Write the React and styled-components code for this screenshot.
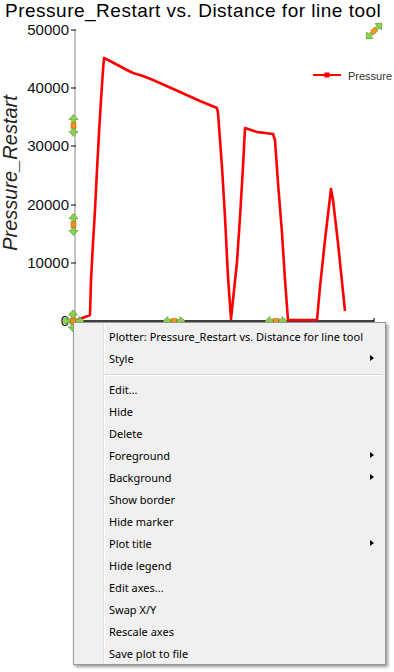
import React from 'react'
import styled, { createGlobalStyle } from 'styled-components'

const GlobalStyle = createGlobalStyle`
  html, body {
    margin: 0;
    padding: 0;
    background: #fff;
  }
`

// pixel points of the curve, measured off the plot
const curve = [
  [75, 321], [90, 315], [91, 280], [93, 243], [95, 210], [97, 170], [99, 133],
  [101, 100], [103, 70], [104, 58], [110, 61], [127, 70], [133, 73], [143, 76],
  [153, 80], [180, 92], [200, 101], [217, 108], [218, 113], [222, 167],
  [225, 217], [228, 277], [231, 319], [237, 262], [240, 217], [243, 167],
  [245, 128], [257, 132], [273, 134], [275, 140], [278, 183], [282, 233],
  [285, 280], [288, 320], [317, 320], [320, 287], [325, 240], [331, 189],
  [333, 200], [338, 243], [345, 311],
]

const ticks = [
  { label: '50000', y: 30 },
  { label: '40000', y: 88 },
  { label: '30000', y: 146 },
  { label: '20000', y: 205 },
  { label: '10000', y: 263 },
  { label: '0', y: 321 },
]

const menuItems = [
  { label: 'Plotter: Pressure_Restart vs. Distance for line tool' },
  { label: 'Style', sub: true },
  { sep: true },
  { label: 'Edit...' },
  { label: 'Hide' },
  { label: 'Delete' },
  { label: 'Foreground', sub: true },
  { label: 'Background', sub: true },
  { label: 'Show border' },
  { label: 'Hide marker' },
  { label: 'Plot title', sub: true },
  { label: 'Hide legend' },
  { label: 'Edit axes...' },
  { label: 'Swap X/Y' },
  { label: 'Rescale axes' },
  { label: 'Save plot to file' },
]

const Handle = ({ x, y, angle = 0 }) => (
  <g transform={`translate(${x},${y}) rotate(${angle})`}>
    <HandleArrow points="0,-11 -4.5,-6 -1.8,-6 -1.8,-3 1.8,-3 1.8,-6 4.5,-6" />
    <HandleArrow points="0,11 -4.5,6 -1.8,6 -1.8,3 1.8,3 1.8,6 4.5,6" />
    <HandleDot x={-2.5} y={-2.5} width={5} height={5} />
  </g>
)

const App = () => {
  return (
    <Page>
      <GlobalStyle />
      <Title>Pressure_Restart vs. Distance for line tool</Title>
      <Chart width="394" height="651" viewBox="0 21 394 651">
        <AxisLabel transform="translate(17,173) rotate(-90)">Pressure_Restart</AxisLabel>

        <line x1="75" y1="30" x2="75" y2="321" stroke="#c4c4c4" strokeWidth="2" />
        {ticks.map((t) => (
          <g key={t.label}>
            <line x1="71" y1={t.y} x2="76" y2={t.y} stroke="#000" strokeWidth="1" />
            <TickLabel x="69" y={t.y + 5.4}>{t.label}</TickLabel>
          </g>
        ))}
        <line x1="75" y1="321" x2="374" y2="321" stroke="#000" strokeWidth="1.5" />
        <line x1="374" y1="318" x2="374" y2="324" stroke="#000" strokeWidth="1" />

        <polyline
          points={curve.map((p) => p.join(',')).join(' ')}
          fill="none"
          stroke="#ff0000"
          strokeWidth="2.6"
          strokeLinejoin="round"
        />

        <line x1="313" y1="75" x2="341" y2="75" stroke="#ff0000" strokeWidth="2" />
        <rect x="324.5" y="72.5" width="5" height="5" fill="#ff0000" />
        <LegendText x="348" y="79.5">Pressure</LegendText>

        <Handle x={73.5} y={125.5} />
        <Handle x={73.5} y={224.5} />
        <Handle x={73} y={321} />
        <Handle x={73} y={321} angle={90} />
        <Handle x={174} y={321} angle={90} />
        <Handle x={276} y={321} angle={90} />
        <Handle x={374} y={31} angle={45} />
      </Chart>

      <Menu>
        {menuItems.map((item, i) =>
          item.sep ? (
            <Separator key={i} />
          ) : (
            <Item key={i}>
              {item.label}
              {item.sub && <SubArrow />}
            </Item>
          )
        )}
      </Menu>
    </Page>
  )
}

export default App

const Page = styled.div`
  position: relative;
  width: 394px;
  height: 672px;
  overflow: hidden;
  background: #fff;
`

const Title = styled.h1`
  margin: 0;
  padding-left: 5px;
  height: 21px;
  font: 400 19px/21px "Liberation Sans", Arial, sans-serif;
  letter-spacing: 0.5px;
  color: #000;
  white-space: nowrap;
`

const Chart = styled.svg`
  display: block;
`

const AxisLabel = styled.text`
  font: italic 20px "Liberation Sans", Arial, sans-serif;
  fill: #222;
  text-anchor: middle;
`

const TickLabel = styled.text`
  font: 15px "Liberation Sans", Arial, sans-serif;
  fill: #111;
  text-anchor: end;
`

const LegendText = styled.text`
  font: 11px "Liberation Sans", Arial, sans-serif;
  fill: #333;
`

const HandleArrow = styled.polygon`
  fill: #8fd14f;
  stroke: #5a9e2b;
  stroke-width: 0.7;
`

const HandleDot = styled.rect`
  fill: #f7941d;
  stroke: #c8680f;
  stroke-width: 0.6;
`

const Menu = styled.ul`
  position: absolute;
  left: 73px;
  top: 322px;
  width: 313px;
  box-sizing: border-box;
  margin: 0;
  padding: 2px 2px 0;
  list-style: none;
  border: 1px solid #979797;
  background: linear-gradient(
    90deg,
    #f0f0f0 0 29px,
    #e2e3e3 29px 30px,
    #ffffff 30px 31px,
    #f0f0f0 31px
  );
  box-shadow: 2px 2px 3px rgba(0, 0, 0, 0.4);
  font: 400 11px "Noto Sans", "Liberation Sans", sans-serif;
  color: #000;
`

const Item = styled.li`
  height: 22px;
  display: flex;
  align-items: center;
  justify-content: space-between;
  padding: 0 9px 0 33px;
  white-space: nowrap;
`

const SubArrow = styled.span`
  width: 0;
  height: 0;
  border-top: 3.5px solid transparent;
  border-bottom: 3.5px solid transparent;
  border-left: 4px solid #000;
`

const Separator = styled.li`
  height: 1px;
  margin: 5px 1px 2px 28px;
  background: #d7d7d7;
  border-bottom: 1px solid #fff;
`
